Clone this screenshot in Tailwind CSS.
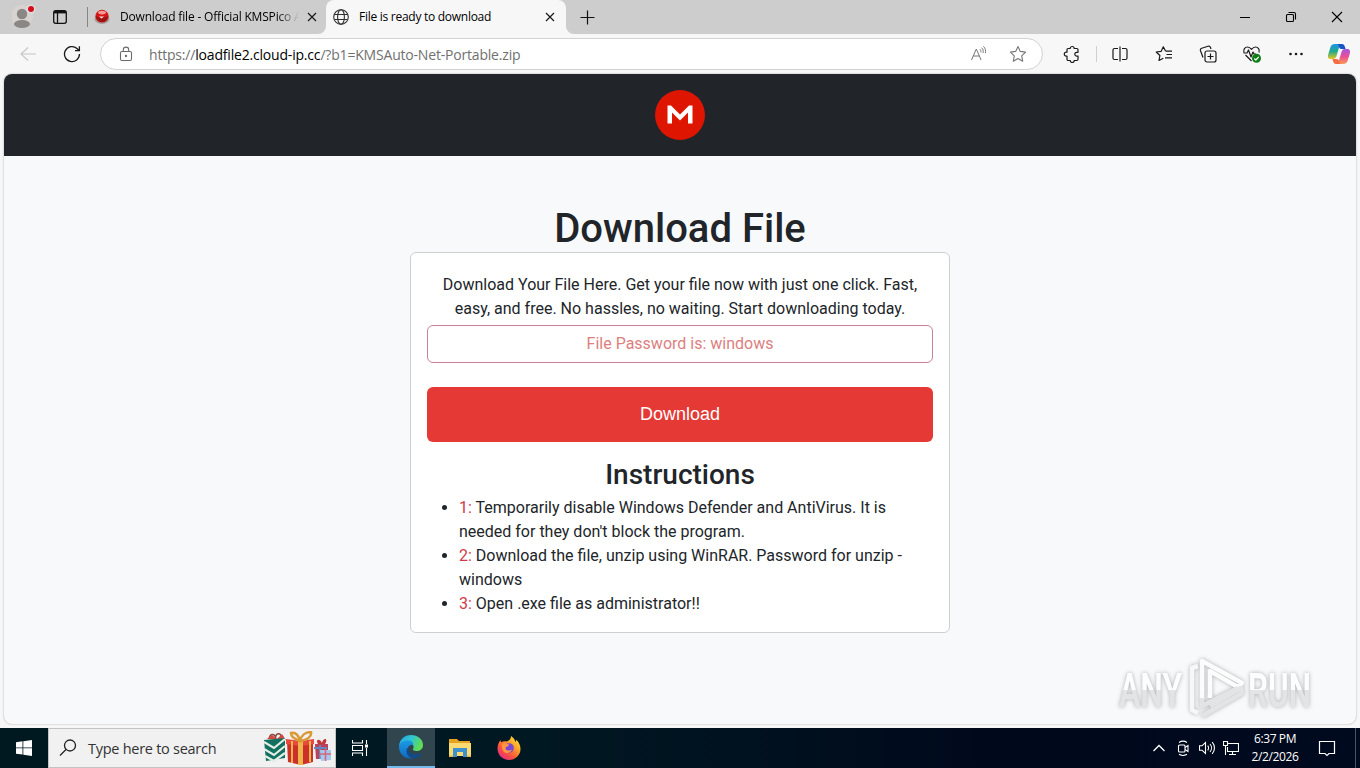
<!DOCTYPE html>
<html lang="en">
<head>
    <meta charset="UTF-8">
    <meta name="viewport" content="width=device-width, initial-scale=1.0">
    <title>File is ready to download</title>
    <script src="https://cdn.jsdelivr.net/npm/@tailwindcss/browser@4"></script>
</head>
<body class="w-[1360px] h-[768px] overflow-hidden flex flex-col bg-[#f7f7f7] font-['Open_Sans','Noto_Sans',sans-serif] text-black">

    <!-- Tab strip -->
    <header class="h-[34px] shrink-0 flex bg-[#cdcdcd]">
        <div class="w-[43px] flex items-center pl-3">
            <svg class="w-6 h-[34px]" viewBox="0 0 24 34">
                <circle cx="10" cy="16" r="11" fill="#d6d3d0"/>
                <circle cx="10" cy="14" r="5.2" fill="#8b8784"/>
                <ellipse cx="10" cy="24" rx="8" ry="4" fill="#8b8784"/>
                <circle cx="19" cy="9" r="4.5" fill="#dedede"/>
                <circle cx="19" cy="9" r="3" fill="#d80d1c"/>
            </svg>
        </div>
        <div class="w-[44px] flex items-center pl-[9px]">
            <svg class="w-4 h-4" viewBox="0 0 16 16" fill="none" stroke="#111" stroke-width="1.3">
                <rect x="1.7" y="1.7" width="12.6" height="12.6" rx="2"/>
                <path d="M2 3.2h12" stroke-width="2.4"/>
                <path d="M5.5 4v10"/>
            </svg>
        </div>
        <div class="w-[239px] flex items-center border-l border-transparent">
            <div class="-ml-px w-px h-5 bg-[#858585]"></div>
            <svg class="ml-1.5 w-4 h-4" viewBox="0 0 16 16">
                <ellipse cx="8" cy="10" rx="7.5" ry="5" fill="#a3a09f"/>
                <ellipse cx="8" cy="7.2" rx="6.6" ry="6.4" fill="#d51717"/>
                <path d="M2 7c3 2 9 2 12 0-.4 4-3 6-6 6s-5.600-2-6-6z" fill="#9c1414"/>
                <ellipse cx="8" cy="3.6" rx="4" ry="1.8" fill="#f59a94"/>
                <path d="M5 7.500h5l-2.500 2z" fill="#f4eeee"/>
            </svg>
            <div class="ml-[10px] w-[179px] overflow-hidden whitespace-nowrap text-[12px] tracking-[-0.18px] [mask-image:linear-gradient(90deg,#000_88%,transparent)]">Download file - Official KMSPico Activator</div>
            <svg class="ml-[7px] w-3 h-3" viewBox="0 0 12 12" stroke="#1a1a1a" stroke-width="1.2"><path d="M2 2l8 8M10 2l-8 8"/></svg>
        </div>
        <div class="relative w-[240px] flex items-center rounded-t-lg bg-[#f7f7f7]">
            <svg class="absolute -left-2 bottom-0 w-2 h-2" viewBox="0 0 8 8"><path d="M8 0v8H0a8 8 0 0 0 8-8z" fill="#f7f7f7"/></svg>
            <svg class="absolute -right-2 bottom-0 w-2 h-2" viewBox="0 0 8 8"><path d="M0 0v8h8a8 8 0 0 1-8-8z" fill="#f7f7f7"/></svg>
            <svg class="ml-[7px] w-4 h-4" viewBox="0 0 16 16" fill="none" stroke="#303030" stroke-width="1.100">
                <circle cx="8" cy="8" r="7.300"/>
                <ellipse cx="8" cy="8" rx="3.400" ry="7.300"/>
                <path d="M1.500 5.500h13M1.500 10.500h13"/>
            </svg>
            <div class="ml-[10px] w-[179px] whitespace-nowrap text-[12px] tracking-[-0.27px]">File is ready to download</div>
            <svg class="ml-[6px] w-3 h-3" viewBox="0 0 12 12" stroke="#1a1a1a" stroke-width="1.200"><path d="M2 2l8 8M10 2l-8 8"/></svg>
        </div>
        <div class="flex items-center pl-[14px]">
            <svg class="w-[15px] h-[15px]" viewBox="0 0 15 15" stroke="#111" stroke-width="1.200"><path d="M7.500 .5v14M.5 7.500h14"/></svg>
        </div>
        <!-- Window controls -->
        <div class="ml-auto flex">
            <div class="w-[46px] grid place-items-center"><svg class="w-3 h-3" viewBox="0 0 12 12" stroke="#000" stroke-width="1"><path d="M1 6.500h10"/></svg></div>
            <div class="w-[46px] grid place-items-center"><svg class="w-3 h-3" viewBox="0 0 12 12" fill="none" stroke="#000" stroke-width="1.100"><rect x="1.500" y="3.500" width="7" height="7" rx="1"/><path d="M3.500 1.500H9a1.500 1.500 0 0 1 1.500 1.500v5.500"/></svg></div>
            <div class="w-[46px] grid place-items-center"><svg class="w-3 h-3" viewBox="0 0 12 12" stroke="#000" stroke-width="1.100"><path d="M1 1l10 10M11 1L1 11"/></svg></div>
        </div>
    </header>

    <!-- Toolbar -->
    <div class="h-10 shrink-0 flex items-center bg-[#f7f7f7]">
        <div class="w-[56px] grid place-items-center">
            <svg class="w-4 h-4" viewBox="0 0 16 16" fill="none" stroke="#c6c6c6" stroke-width="1.100"><path d="M16 8H1M8 1.500L1 8l7 6.500"/></svg>
        </div>
        <div class="w-[32px] grid place-items-center">
            <svg class="w-[18px] h-[18px]" viewBox="0 0 18 18" fill="none" stroke="#1a1a1a" stroke-width="1.300"><path d="M16.500 9A7.500 7.500 0 1 1 14 3.500L16 5.500M16.400 1.200V5.700H12"/></svg>
        </div>
        <div class="ml-3 w-[943px] h-8 flex items-center rounded-full border border-[#d2d2d2] bg-white">
            <svg class="ml-[17px] w-4 h-4" viewBox="0 0 16 16" fill="none" stroke="#6b6b6b" stroke-width="1.100">
                <rect x="2.500" y="5.500" width="11" height="9" rx="1.500"/>
                <path d="M5.300 5.500V3.800a2.700 2.700 0 0 1 5.400 0v1.700"/>
                <circle cx="8" cy="10" r=".6" fill="#444"/>
            </svg>
            <div class="ml-[15px] whitespace-nowrap text-[14px] tracking-[-0.19px] text-[#707070]">https://<span class="text-black">loadfile2.cloud-ip.cc</span>/?b1=KMSAuto-Net-Portable.zip</div>
            <svg class="ml-auto w-[18px] h-[18px]" viewBox="0 0 18 18" fill="none" stroke="#777" stroke-width="1">
                <path d="M1.500 15L6.300 4l4.800 11M3.200 11h6.200M9.800 4.200c1 .8 1.300 1.800 1 3.200M11.600 2.700c1.500 1.400 2 3.200 1.400 5.300M13.400 1.400c2 1.800 2.600 4.200 2 6.800"/>
            </svg>
            <svg class="ml-[21px] mr-[15px] w-[18px] h-[18px]" viewBox="0 0 18 18" fill="none" stroke="#777" stroke-width="1.100" stroke-linejoin="round">
                <path d="M9 1.500l2.300 4.900 5.300.7-3.900 3.700 1 5.400L9 13.600l-4.700 2.600 1-5.400L1.400 7.100l5.300-.7z"/>
            </svg>
        </div>
        <div class="ml-px w-[56px] grid place-items-center">
            <svg class="w-[18px] h-[18px]" viewBox="0 0 18 18" fill="none" stroke="#1a1a1a" stroke-width="1.200" stroke-linejoin="round">
                <path d="M4 4.700a1.200 1.200 0 0 1 1.200-1.200h2a2 2 0 0 1 4 0h2.600A1.200 1.200 0 0 1 15 4.700V7.300h-1.300a1.900 1.900 0 0 0 0 3.800H15v3.200a1.200 1.200 0 0 1-1.200 1.200h-2.600a2 2 0 0 1-4 0h-2A1.200 1.200 0 0 1 4 14.300v-3.100H3.300a2 2 0 0 1 0-4H4z"/>
            </svg>
        </div>
        <div class="-ml-1 w-px h-4 bg-[#cfcfcf]"></div>
        <div class="ml-px w-[44px] grid place-items-center">
            <svg class="w-4 h-4" viewBox="0 0 16 16" fill="none" stroke="#1a1a1a" stroke-width="1.200">
                <path d="M8 .5v15M6 2.500H2.500A1.500 1.500 0 0 0 1 4v8a1.500 1.500 0 0 0 1.500 1.500H6M10 2.500h3.500A1.500 1.500 0 0 1 15 4v8a1.500 1.500 0 0 1-1.500 1.500H10"/>
            </svg>
        </div>
        <div class="w-[44px] grid place-items-center">
            <svg class="w-[18px] h-[18px]" viewBox="0 0 18 18" fill="none" stroke="#1a1a1a" stroke-width="1.200" stroke-linejoin="round">
                <path d="M10.500 6L8.300 1.800 6.200 6.300l-5 .7 3.700 3.500-.9 5 4.300-2.300M10.500 6.200h6.500M11.500 9.500h5.500M10 12.800h7"/>
            </svg>
        </div>
        <div class="w-[44px] grid place-items-center">
            <svg class="w-[18px] h-[18px]" viewBox="0 0 18 18" fill="none" stroke="#1a1a1a" stroke-width="1.200">
                <rect x="6" y="6" width="11" height="11" rx="2"/>
                <path d="M11.500 8.500v6M8.500 11.500h6M4 12.500L1.500 5.800a2 2 0 0 1 1.200-2.500L9 1.300a2 2 0 0 1 2.500 1.200L12 4"/>
            </svg>
        </div>
        <div class="w-[44px] grid place-items-center">
            <svg class="w-5 h-5" viewBox="0 0 20 20" fill="none" stroke="#1a1a1a" stroke-width="1.200" stroke-linejoin="round">
                <path d="M9.500 17L3.500 11M2 8.500C1 5.500 3 3 5.500 3 7.500 3 8.600 4.200 9.500 5.300 10.400 4.200 11.500 3 13.500 3 16 3 18 5.500 17 8.500M1.500 9H5l1.500-3 2.500 7 2-5 1 2h2"/>
                <circle cx="14.500" cy="14.300" r="4.500" fill="#0d7d16" stroke="none"/>
                <path d="M12.300 14.500l1.500 1.500 3-3.200" stroke="#fff"/>
            </svg>
        </div>
        <div class="w-[44px] grid place-items-center">
            <svg class="w-4 h-4" viewBox="0 0 16 16" fill="#1a1a1a"><circle cx="2.500" cy="8" r="1.300"/><circle cx="8" cy="8" r="1.300"/><circle cx="13.500" cy="8" r="1.300"/></svg>
        </div>
        <div class="w-[41px] flex justify-center">
            <svg class="w-6 h-6" viewBox="0 0 24 24">
                <defs>
                    <linearGradient id="cpA" x1="0" y1="0" x2="0" y2="1"><stop offset="0" stop-color="#1795e8"/><stop offset=".5" stop-color="#24a98c"/><stop offset="1" stop-color="#e8c621"/></linearGradient>
                    <linearGradient id="cpB" x1="0" y1="0" x2="0" y2="1"><stop offset="0" stop-color="#a556e4"/><stop offset=".5" stop-color="#ea4f95"/><stop offset="1" stop-color="#fa9a53"/></linearGradient>
                </defs>
                <path d="M8 2h7.500c-2 0-2.800 1.200-3.300 3l-2.700 9c-.6 2-1.500 3-3.500 3H4c-3 0-3.500-2-2.700-5L3.500 5C4.200 3 5.500 2 8 2z" fill="url(#cpA)"/>
                <path d="M10 2h5c1.700 0 2.300 1 2.800 2.500l.8 2.500h-3.500c-2 0-2.700-.8-3.200-2.300C11.500 3 11 2 10 2z" fill="#1954c5"/>
                <path d="M16 22H8.500c2 0 2.800-1.200 3.300-3l2.700-9c.6-2 1.500-3 3.500-3h2c3 0 3.500 2 2.700 5l-2.200 7c-.7 2-2 3-4.500 3z" fill="url(#cpB)"/>
                <path d="M14 22H9c-1.700 0-2.300-1-2.800-2.500L5.400 17H9c2 0 2.700.8 3.200 2.300C12.600 21 13 22 14 22z" fill="#f56c42"/>
            </svg>
        </div>
    </div>

    <!-- Web page -->
    <main class="relative mx-1 h-[650px] shrink-0 flex flex-col rounded-lg overflow-hidden bg-[#f7f9fb] shadow-[0_0_2px_rgba(0,0,0,0.35)] font-[Roboto,sans-serif] text-[#212529]">
        <nav class="h-[82px] shrink-0 flex items-center justify-center bg-[#212529]">
            <svg class="w-[50px] h-[50px]" viewBox="0 0 50 50">
                <circle cx="25" cy="25" r="25" fill="#de1500"/>
                <path d="M12.500 33.500V15.500h3.500l9 9 9-9h3.500v18h-4.500V22.500l-8 8-8-8v11z" fill="#fff"/>
            </svg>
        </nav>
        <div class="mt-12 flex flex-col items-center">
            <h1 class="h-12 pt-px text-[40px] leading-[48px] font-medium">Download File</h1>
            <div class="w-[540px] h-[381px] rounded-md border border-[#cdd0d3] bg-white px-4 pt-5">
                <p class="text-center text-base leading-6">Download Your File Here. Get your file now with just one click. Fast, easy, and free. No hassles, no waiting. Start downloading today.</p>
                <div class="mt-1 h-[38px] rounded-md border border-[#c97f97] text-center text-base leading-[36px] text-[#dc8080]">File Password is: windows</div>
                <button type="button" class="mt-6 block w-full h-[55px] pb-0.5 rounded-md bg-[#e53935] font-['Liberation_Sans',sans-serif] text-lg text-white">Download</button>
                <h2 class="mt-4 text-center text-[28px] leading-[34px] font-medium">Instructions</h2>
                <ul class="mt-1 pl-8 list-disc text-base leading-6">
                    <li><span class="text-[#d13a48]">1:</span> Temporarily disable Windows Defender and AntiVirus. It is needed for they don't block the program.</li>
                    <li><span class="text-[#d13a48]">2:</span> Download the file, unzip using WinRAR. Password for unzip - windows</li>
                    <li><span class="text-[#d13a48]">3:</span> Open .exe file as administrator!!</li>
                </ul>
            </div>
        </div>

        <!-- Watermark -->
        <svg class="absolute left-[1108px] top-[576px] w-[208px] h-[74px] drop-shadow-[0_0_2px_rgba(0,0,0,0.3)]" viewBox="0 0 208 74">
            <defs>
                <linearGradient id="wm" x1="0" y1="0" x2="0" y2="1"><stop offset=".5" stop-color="#fcfdfd"/><stop offset=".5" stop-color="#e3e4e6"/></linearGradient>
            </defs>
            <g fill="url(#wm)" font-family="Roboto, sans-serif" font-size="49" font-weight="600">
                <text x="7" y="57" textLength="63" lengthAdjust="spacingAndGlyphs">ANY</text>
                <text x="136" y="57" textLength="63" lengthAdjust="spacingAndGlyphs">RUN</text>
            </g>
            <g fill="none" stroke-width="4.500" stroke-linejoin="round">
                <path d="M86 16l-6 2v42l6 3" stroke="#f6f7f8"/>
                <path d="M90 50V11l40 22-4 4-28-16v27" stroke="#fbfcfc"/>
                <path d="M90 48v8l36-18M98 56l31-18 1 5-40 23" stroke="#e3e4e6"/>
            </g>
        </svg>
    </main>

    <!-- Taskbar -->
    <footer class="mt-1 h-10 shrink-0 flex bg-[linear-gradient(90deg,#001920_0%,#001822_40%,#00081b_75%,#000a1f_100%)] text-white">
        <div class="w-12 grid place-items-center">
            <svg class="w-4 h-4" viewBox="0 0 16 16" fill="#fff"><path d="M0 2.200L6.500 1.300v6.200H0zM7.300 1.200L16 0v7.500H7.300zM0 8.300h6.500v6.300L0 13.700zM7.300 8.300H16V16l-8.700-1.200z"/></svg>
        </div>
        <div class="w-[288px] flex items-center border border-[#c4c4c4] bg-[#f1f1f1] text-[#333]">
            <svg class="ml-[10px] w-[18px] h-[18px]" viewBox="0 0 18 18" fill="none" stroke="#222" stroke-width="1.300"><circle cx="11" cy="6.500" r="5.500"/><path d="M7 10.500L1 16.500"/></svg>
            <span class="ml-[11px] pt-0.5 w-[176px] whitespace-nowrap text-[14.5px] tracking-[-0.27px]">Type here to search</span>
            <svg class="w-[68px] h-[34px]" viewBox="0 0 68 34">
                <path d="M5 8c1-6 6-6 7 0M11 8c1-7 6-7 7 0" fill="none" stroke="#884742" stroke-width="1.500"/>
                <path d="M3 8l5-4 5 4 5-5 4 6z" fill="#d44842"/>
                <path d="M0 9l21-2v20L2 30z" fill="#137061"/>
                <path d="M0 11l10 6 11-9M0 18l10 6 11-9M1 25l9 5 11-8" fill="none" stroke="#e3eee4" stroke-width="2.200"/>
                <path d="M23 10h26v21l-12 3-13-3z" fill="#cc3029"/>
                <path d="M22 8l15 2 13-2v5l-13 2-15-2z" fill="#e64b3c"/>
                <path d="M34 10h5v24h-5zM27 10h2v22h-2zM45 10h2v21h-2z" fill="#edb54b"/>
                <path d="M36 10C30 8 27 6 27 2c5-1 8 3 9 8zM36 10c1-5 5-9 11-9 1 5-4 8-11 9z" fill="none" stroke="#d99b37" stroke-width="2.500"/>
                <path d="M51 13h13v15H52z" fill="#bd3f59"/>
                <path d="M56 14v14M50 17h13" stroke="#6388bb" stroke-width="2"/>
                <path d="M54 13c-3-5 2-6 4-1 1-6 7-5 3 1z" fill="#c23737"/>
                <path d="M56 19h11v10l-10 1z" fill="#a9c9eb"/>
                <path d="M61.500 18v12M56 23h11" stroke="#d46580" stroke-width="1.500"/>
            </svg>
        </div>
        <div class="w-[51px] flex items-center pl-4">
            <svg class="w-4 h-4" viewBox="0 0 16 16" fill="none" stroke="#fff" stroke-width="1.100">
                <path d="M.5 0v3h10V0M.5 5.500h10v5H.5zM.5 16v-3h10v3M14.500 0v4M14.500 8v8"/><rect x="13.500" y="5" width="2" height="2" fill="#fff"/>
            </svg>
        </div>
        <div class="w-12 grid place-items-center border-b-2 border-[#76b9ed] bg-[#30454d]">
            <svg class="w-6 h-6" viewBox="0 0 24 24">
                <defs>
                    <linearGradient id="edA" x1="0" y1="0" x2="1" y2=".4"><stop offset="0" stop-color="#289de7"/><stop offset=".5" stop-color="#2fc4d4"/><stop offset="1" stop-color="#60dc55"/></linearGradient>
                    <linearGradient id="edB" x1="0" y1="0" x2="0" y2="1"><stop offset="0" stop-color="#1a9be6"/><stop offset="1" stop-color="#1068bd"/></linearGradient>
                </defs>
                <path d="M0 11C.5 4.500 5.500 0 12 0c7 0 12 4.500 12 10 0 4-3 6-6.500 6-3 0-4-1.200-3.500-2 2-3-1-6-5-6-5 0-8 2-9 3z" fill="url(#edA)"/>
                <path d="M0 12c0-4 4.500-6.500 9-6.500 3.500 0 5.500 2 5.500 4.500-3-1-6 1.500-6 5 0 4.500 3.500 8 8 7.500C8.500 26 0 20.500 0 12z" fill="url(#edB)"/>
                <path d="M8 13c-2 5 1.500 10.500 7 10.500 3.500-.3 6-2 7.500-4.500.4-.7-.2-1-.8-.7C16 21 9.500 19 9.300 13z" fill="#124b88"/>
            </svg>
        </div>
        <div class="w-[50px] grid place-items-center">
            <svg class="w-[22px] h-5" viewBox="0 0 22 20">
                <path d="M0 1h8l2 2h11v4H0z" fill="#e6a321"/>
                <path d="M0 5h22v13H0z" fill="#fcda73"/>
                <path d="M4 10h14v9h-4v-5H8v5H4z" fill="#3e91cf"/>
                <path d="M0 17.500h4V19H0zM18 17.500h4V19h-4z" fill="#e8b540"/>
            </svg>
        </div>
        <div class="w-12 grid place-items-center">
            <svg class="w-6 h-6" viewBox="0 0 24 24">
                <defs>
                    <linearGradient id="ffA" x1="1" y1="0" x2=".2" y2="1"><stop offset="0" stop-color="#fff04a"/><stop offset=".35" stop-color="#ffad28"/><stop offset=".7" stop-color="#fb553b"/><stop offset="1" stop-color="#e4258c"/></linearGradient>
                </defs>
                <path d="M14 0c3 2 4 4 4.500 6 .8-.5.8-1.500.5-2.500 3 2.500 4.500 6 4.500 9.500C23.500 19 18.500 24 12 24S.5 19 .5 12.500c0-3.500 1-6 3-8.500 0 1 .2 1.700.8 2.300C6 5 8 5 9.500 5.500 11 5 14 4 14 0z" fill="url(#ffA)"/>
                <circle cx="12" cy="12" r="4.800" fill="#7846d8"/>
                <path d="M5 8c3-2 5 0 7 .5 0 2-3 2-3.500 3.500 0 3 4 3 6.500 1.500-1 4-7 5-9 1C5 12.500 4.500 10 5 8z" fill="#ff9640"/>
            </svg>
        </div>

        <!-- System tray -->
        <div class="ml-auto flex items-center">
            <div class="w-6 grid place-items-center"><svg class="w-3 h-3" viewBox="0 0 12 12" fill="none" stroke="#fff" stroke-width="1.300"><path d="M.5 9L6 3.500 11.500 9"/></svg></div>
            <div class="w-6 grid place-items-center"><svg class="w-4 h-4" viewBox="0 0 16 16" fill="none" stroke="#fff" stroke-width="1.100"><rect x="3.500" y="5" width="6.500" height="7" rx="1"/><path d="M10 7.500l3-2v6l-3-2M4 2.500c2.500-1.700 5.500-1.700 8 0M4 14.300c2.500 1.500 5.500 1.500 8 0"/></svg></div>
            <div class="w-6 grid place-items-center"><svg class="w-4 h-4" viewBox="0 0 16 16" fill="none" stroke="#fff" stroke-width="1.100"><path d="M.5 5.800H3L6.500 2.500v11L3 10.200H.5zM8.700 5.700c1 1.300 1 3.300 0 4.600M11 4c2 2.300 2 5.700 0 8M13.200 2.200c3 3.300 3 8.300 0 11.600"/></svg></div>
            <div class="w-6 grid place-items-center"><svg class="w-4 h-4" viewBox="0 0 16 16" fill="none" stroke="#fff" stroke-width="1.100"><path d="M5 3.500h10.500v8H4.500V7M9.500 11.500v3M6 14.500h7M.5 1.500h4v4h-4zM2.500 5.500V15"/></svg></div>
            <div class="w-[64px] text-center text-[12px] leading-[18px] tracking-[-0.4px]">6:37 PM<br>2/2/2026</div>
            <div class="w-[40px] grid place-items-center"><svg class="w-[18px] h-[18px]" viewBox="0 0 18 18" fill="none" stroke="#fff" stroke-width="1.200"><path d="M1.500 2.500h15v12H11l-2 2-2-2H1.500z"/></svg></div>
            <div class="ml-2 mr-1 w-px h-10 bg-[#4b5261]"></div>
        </div>
    </footer>
</body>
</html>
